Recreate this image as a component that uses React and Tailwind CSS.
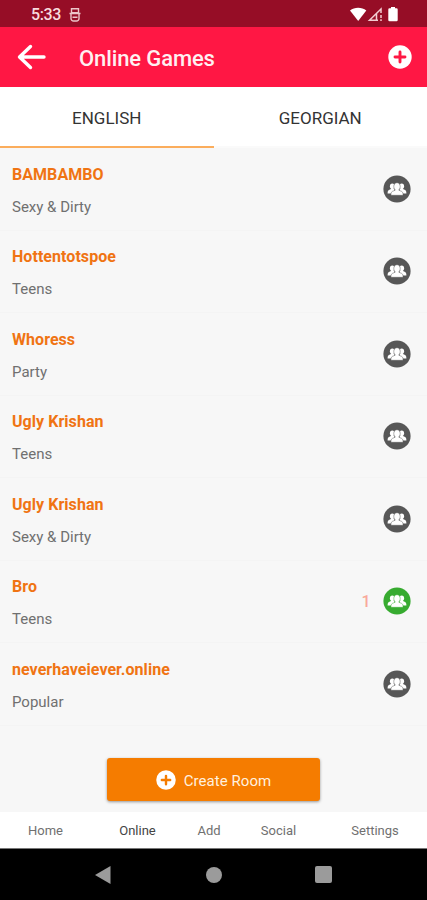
import React from "react";

const tabs = ["ENGLISH", "GEORGIAN"];

const rooms = [
  { name: "BAMBAMBO", category: "Sexy & Dirty", players: 0 },
  { name: "Hottentotspoe", category: "Teens", players: 0 },
  { name: "Whoress", category: "Party", players: 0 },
  { name: "Ugly Krishan", category: "Teens", players: 0 },
  { name: "Ugly Krishan", category: "Sexy & Dirty", players: 0 },
  { name: "Bro", category: "Teens", players: 1 },
  { name: "neverhaveiever.online", category: "Popular", players: 0 },
];

const navItems = [
  { label: "Home", className: "w-[91px]" },
  { label: "Online", className: "w-[93px] text-[#444]" },
  { label: "Add", className: "w-[50px]" },
  { label: "Social", className: "w-[89px]" },
  { label: "Settings", className: "w-[104px]" },
];

const PlusCircle = ({ className }) => (
  <svg viewBox="0 0 24 24" className={className}>
    <circle cx="12" cy="12" r="11.7" fill="#fff" />
    <path
      d="M12 7v10M7 12h10"
      stroke="currentColor"
      strokeWidth="2.9"
      strokeLinecap="round"
    />
  </svg>
);

const PeopleIcon = ({ active }) => (
  <svg
    viewBox="0 0 28 28"
    className={`h-7 w-7 ${active ? "text-[#37ab30]" : "text-[#575757]"}`}
  >
    <circle cx="14" cy="14" r="13.6" fill="currentColor" />
    <g fill="#fff">
      <ellipse cx="9.3" cy="11.2" rx="2.4" ry="2.8" />
      <ellipse cx="18.7" cy="11.2" rx="2.4" ry="2.8" />
      <path d="M4.6 18.4c0-2.3.6-3.2 2.4-3.8l1.4-.8h3v4.6z" />
      <path d="M23.4 18.4c0-2.3-.6-3.2-2.4-3.8l-1.4-.8h-3v4.6z" />
    </g>
    <path
      d="M7.900 20.300c0-3 .6-3.700 2.700-4.400l1.700-.8c-.9-.9-1.500-2.100-1.500-3.700 0-2.200 1.300-3.700 3.200-3.700s3.200 1.500 3.200 3.700c0 1.600-.6 2.800-1.500 3.700l1.700.8c2.100.7 2.700 1.400 2.700 4.400z"
      fill="#fff"
      stroke="currentColor"
      strokeWidth="0.5"
    />
  </svg>
);

const StatusBar = () => (
  <div className="flex h-[27px] items-center bg-[#960d26] pt-[3px] pr-[29px] pl-[31px] text-white">
    <span className="text-[16px] leading-none font-medium tracking-[-0.4px] text-[#f8dcdf]">
      5:33
    </span>
    <svg viewBox="0 0 12 14" className="ml-[8px] h-[14px] w-3 text-[#ecc5c9]">
      <g fill="none" stroke="currentColor" strokeWidth="1.4">
        <path d="M2.500.8h7v4h-7zM.5 5.500h11M2 6v4.500a2.500 2.500 0 0 0 2.500 2.500h3a2.500 2.500 0 0 0 2.500-2.500V6M3.500 9.300h5" />
      </g>
    </svg>
    <svg viewBox="0 0 48 16" className="ml-auto h-4 w-12" fill="#fff">
      <path d="M0 3.400C4.500-.1 11.800-.1 16.300 3.400L8.200 14z" />
      <path
        d="M31 6V2L19.500 13.300H28M26.500 6.500v6.500M31 8v3M31 12.300v1.700"
        fill="none"
        stroke="#f3cdd2"
        strokeWidth="1.5"
      />
      <path d="M41 0h4v1.200h1.500q1.200 0 1.200 1.200V13q0 1.200-1.200 1.200h-7q-1.200 0-1.200-1.200V2.400q0-1.200 1.200-1.200H41z" />
    </svg>
  </div>
);

const Header = () => (
  <div className="flex h-[60px] items-center bg-[#ff1744] pr-[15px] pl-[17px]">
    <svg
      viewBox="0 0 30 26"
      className="h-[26px] w-[30px]"
      fill="none"
      stroke="#fff"
      strokeWidth="3.4"
      strokeLinecap="round"
      strokeLinejoin="round"
    >
      <path d="M13.500 2.500L2.500 13l11 10.500M3 13h24" />
    </svg>
    <h1 className="mt-[3px] ml-8 text-[22px] leading-7 font-medium tracking-[-0.12px] text-[#fff0f1]">
      Online Games
    </h1>
    <PlusCircle className="ml-auto h-6 w-6 text-[#ff1744]" />
  </div>
);

const RoomRow = ({ room }) => (
  <div className="flex h-[82.5px] items-center border-b border-[#f4f4f4] pr-[16.5px] pl-3">
    <div className="pt-1">
      <h2 className="text-[16px] leading-5 font-bold tracking-[0.05px] text-[#f07413]">
        {room.name}
      </h2>
      <p className="mt-3 text-[15px] leading-5 text-[#707070]">
        {room.category}
      </p>
    </div>
    <div className="ml-auto flex items-center">
      {room.players > 0 && (
        <span className="mr-3 pt-[2px] text-[16px] leading-5 font-medium text-[#f9a99a]">
          {room.players}
        </span>
      )}
      <PeopleIcon active={room.players > 0} />
    </div>
  </div>
);

const App = () => {
  return (
    <div className="flex h-[900px] w-[427px] flex-col overflow-hidden bg-[#f7f7f7] font-['Roboto',sans-serif]">
      <StatusBar />
      <Header />

      {/* Language tabs */}
      <div className="flex h-[61px] bg-white">
        {tabs.map((tab, index) => (
          <div
            key={tab}
            className={`flex flex-1 items-center justify-center border-b-2 pt-1 text-[17px] text-[#333] ${
              index === 0 ? "border-[#fbad5c]" : "border-[#fafafa]"
            }`}
          >
            {tab}
          </div>
        ))}
      </div>

      {/* Rooms */}
      <div className="flex-1">
        {rooms.map((room, index) => (
          <RoomRow key={index} room={room} />
        ))}
      </div>

      <div className="flex h-[54px] justify-center">
        <button className="flex h-[43px] w-[213px] items-center justify-center rounded-[3px] bg-[#f57c00] text-[15px] text-[#fff0df] shadow-[0_1px_3px_rgba(0,0,0,0.4)]">
          <PlusCircle className="mr-2 h-5 w-5 text-[#f57c00]" />
          <span className="pt-[3px] tracking-[0.05px]">Create Room</span>
        </button>
      </div>

      {/* Bottom navigation */}
      <div className="flex h-[37px] items-center border-b border-[#777] bg-white pt-[2px] text-[13px] text-[#707070]">
        {navItems.map((item) => (
          <div key={item.label} className={`text-center ${item.className}`}>
            {item.label}
          </div>
        ))}
      </div>

      {/* System buttons */}
      <div className="flex h-[51px] items-center bg-black pl-[95px] text-[#9b9b9b]">
        <svg viewBox="0 0 16 18" className="h-[18px] w-4" fill="currentColor">
          <path d="M15.500 0v18L0 9z" />
        </svg>
        <div className="ml-[95px] h-4 w-4 rounded-full bg-[#9b9b9b]" />
        <div className="ml-[93px] h-[17px] w-[17px] rounded-[2px] bg-[#9b9b9b]" />
      </div>
    </div>
  );
};

export default App;
